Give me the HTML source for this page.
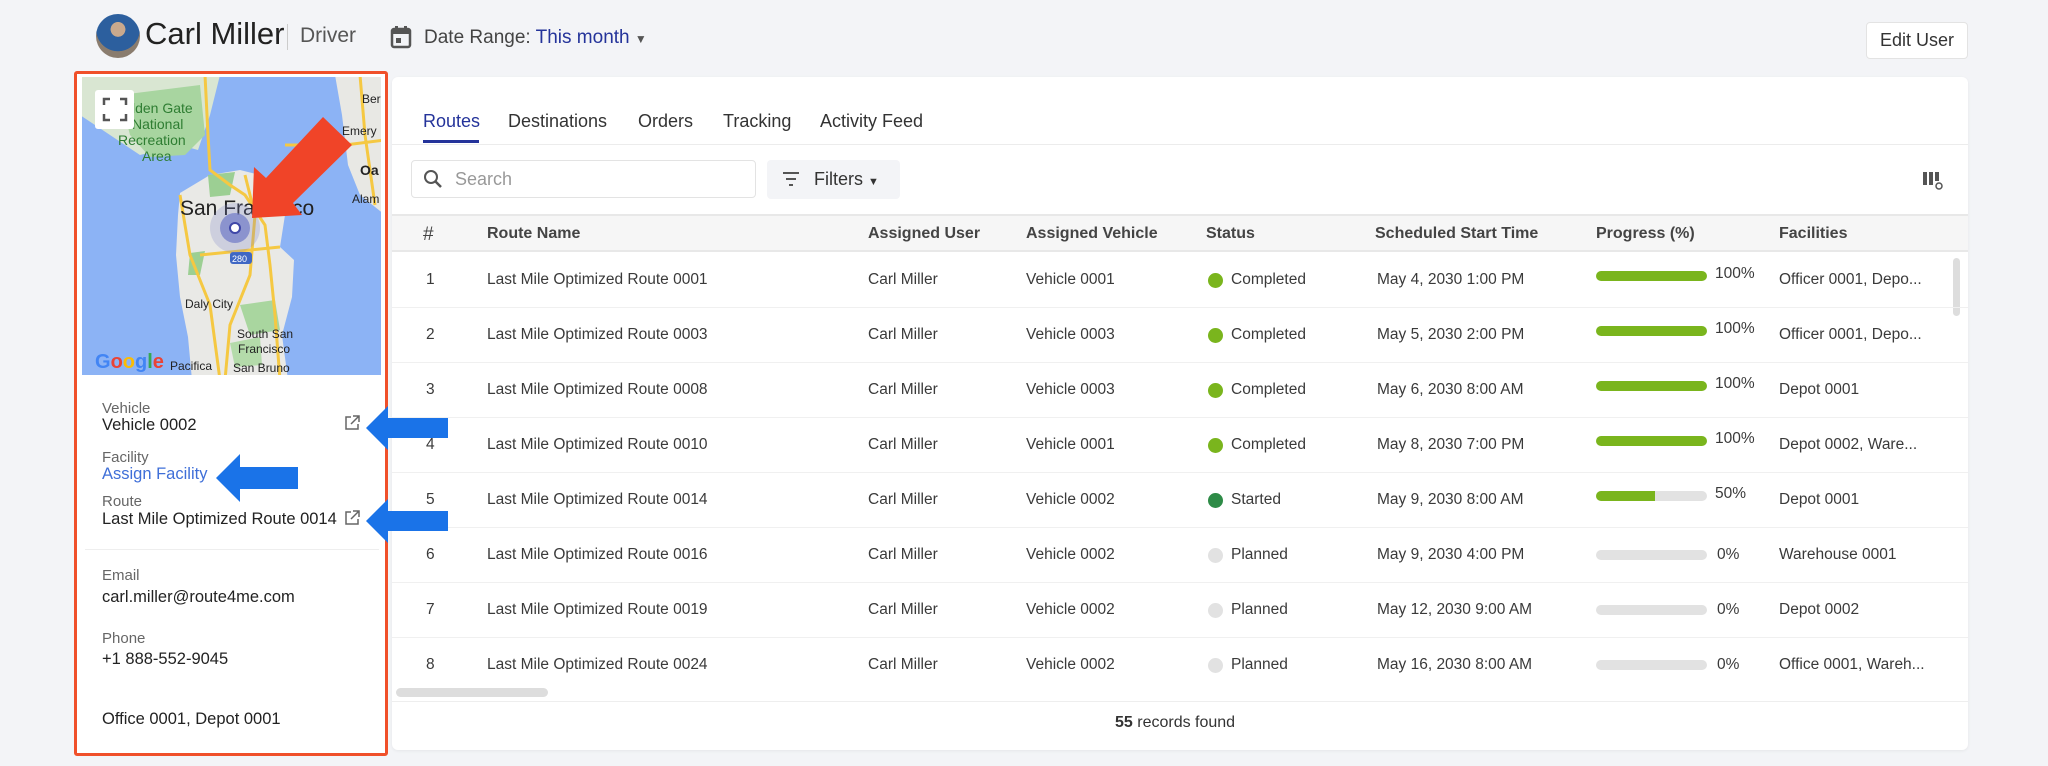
<!DOCTYPE html>
<html><head><meta charset="utf-8"><style>
*{box-sizing:border-box;margin:0;padding:0}
body{width:2048px;height:766px;background:#f3f4f7;font-family:"Liberation Sans",sans-serif;color:#333;position:relative;overflow:hidden}
.a{position:absolute;white-space:nowrap}
.t{font-size:15.5px;color:#3a3a3a}
.h{font-size:16px;font-weight:bold;color:#444}
.lbl{font-size:15px;color:#666}
.val{font-size:16.5px;color:#222}
.bar{position:absolute;width:111px;height:10px;border-radius:5px;background:#e2e2e2;overflow:hidden}
.bar i{display:block;height:100%;background:#7ab51d}
.dot{position:absolute;width:15px;height:15px;border-radius:50%}
.row{position:absolute;left:392px;width:1576px;height:1px;background:#f0f0f0}
</style></head><body>
<!-- header -->
<div class="a" style="left:96px;top:14px;width:44px;height:44px;border-radius:50%;background:radial-gradient(circle at 50% 35%,#c9a98d 0 20%,#2c5f9e 21% 60%,#8a7c6e 61%);"></div>
<div class="a" style="left:145px;top:16px;font-size:31px;color:#222">Carl Miller</div>
<div class="a" style="left:287px;top:24px;width:1px;height:26px;background:#ccc"></div>
<div class="a" style="left:300px;top:24px;font-size:21px;color:#555">Driver</div>
<svg class="a" style="left:390px;top:25px" width="22" height="24" viewBox="0 0 22 24"><rect x="2" y="4" width="18" height="18" rx="2" fill="none" stroke="#555" stroke-width="2.5"/><rect x="2" y="4" width="18" height="5" fill="#555"/><rect x="5" y="1" width="3" height="5" fill="#555"/><rect x="14" y="1" width="3" height="5" fill="#555"/><rect x="6" y="13" width="5" height="5" fill="#555"/></svg>
<div class="a" style="left:424px;top:27px;font-size:19px;color:#444">Date Range: <span style="color:#24339a">This month</span> <span style="font-size:12px;color:#555">▼</span></div>
<div class="a" style="left:1866px;top:22px;width:102px;height:37px;background:#fff;border:1px solid #e3e3e3;border-radius:4px;font-size:18px;color:#333;text-align:center;line-height:35px">Edit User</div>

<!-- left panel -->
<div class="a" style="left:74px;top:71px;width:314px;height:685px;border:3px solid #f0502a;border-radius:3px;background:#fff"></div>
<div class="a" style="left:82px;top:77px;width:299px;height:298px;overflow:hidden;background:#8ab4f8">
<svg width="305" height="305" viewBox="0 0 305 305" style="position:absolute;left:-2px;top:-2px">
<rect width="305" height="305" fill="#8cb3f5"/>
<path d="M0 0H140L130 40 118 75 100 70 60 80 30 60 0 40Z" fill="#d9e6d2"/>
<path d="M40 20 L120 10 125 60 105 80 70 82 50 60Z" fill="#a8d5a0"/>
<path d="M255 0H305V140L280 120 268 90 262 40Z" fill="#e8e8e4"/>
<path d="M100 118L130 100 160 95 180 100 192 112 205 140 200 172 214 185 212 222 202 260 208 305H112L108 262 100 222 96 180 98 140Z" fill="#e9e9e6"/>
<path d="M128 100L155 97 150 120 130 122Z" fill="#9ccf93"/>
<path d="M110 178L125 176 120 200 108 200Z" fill="#9ccf93"/>
<path d="M160 230L195 225 200 255 170 260Z" fill="#a9d69f"/>
<path d="M150 268L180 262 182 290 155 292Z" fill="#b4dbaa"/>
<g fill="none" stroke="#f5c842" stroke-width="3">
<path d="M125 0 L128 60 130 95 150 110 165 120 185 150 190 190 195 240 200 305"/>
<path d="M100 120 L110 180 130 230 140 305"/>
<path d="M165 100 L175 140 170 200 150 250 145 305"/>
<path d="M205 70 L265 70 305 65"/>
<path d="M280 0 L285 60 295 130"/>
<path d="M120 180 L200 172"/>
</g>
<g font-family="Liberation Sans,sans-serif">
<text x="52" y="38" font-size="14" fill="#2e7d32">lden Gate</text>
<text x="52" y="54" font-size="14" fill="#2e7d32">National</text>
<text x="38" y="70" font-size="14" fill="#2e7d32">Recreation</text>
<text x="62" y="86" font-size="14" fill="#2e7d32">Area</text>
<text x="100" y="140" font-size="21" fill="#222">San Francisco</text>
<text x="105" y="233" font-size="12" fill="#222">Daly City</text>
<text x="157" y="263" font-size="12" fill="#222">South San</text>
<text x="158" y="278" font-size="12" fill="#222">Francisco</text>
<text x="90" y="295" font-size="12" fill="#222">Pacifica</text>
<text x="153" y="297" font-size="12" fill="#222">San Bruno</text>
<text x="262" y="60" font-size="12" fill="#222">Emery</text>
<text x="280" y="100" font-size="14" font-weight="bold" fill="#222">Oa</text>
<text x="272" y="128" font-size="12" fill="#222">Alam</text>
<text x="282" y="28" font-size="12" fill="#222">Ber</text>
<text x="15" y="293" font-size="20" font-weight="bold"><tspan fill="#4285f4">G</tspan><tspan fill="#ea4335">o</tspan><tspan fill="#fbbc05">o</tspan><tspan fill="#4285f4">g</tspan><tspan fill="#34a853">l</tspan><tspan fill="#ea4335">e</tspan></text>
</g>
<rect x="150" y="177" width="22" height="12" rx="3" fill="#3f67c4"/><text x="152" y="187" font-size="9" fill="#fff" font-family="Liberation Sans">280</text>
<circle cx="155" cy="153" r="25" fill="#7b83c9" opacity=".25"/>
<circle cx="155" cy="153" r="15" fill="#7b83c9" opacity=".8"/>
<circle cx="155" cy="153" r="5" fill="#fff" stroke="#3f47a8" stroke-width="2"/>
<rect x="15" y="15" width="39" height="39" rx="3" fill="#fff"/>
<path d="M24 30v-6h6M40 24h6v6M46 39v6h-6M30 45h-6v-6" stroke="#555" stroke-width="2.5" fill="none"/>
<path d="M243 42 L272 70 213 128 222 140 172 143 174 92 186 103Z" fill="#f04428"/>
</svg></div>
<div class="a" style="left:85px;top:549px;width:294px;height:1px;background:#eee"></div>
<div class="a lbl" style="left:102px;top:400px">Vehicle</div>
<div class="a val" style="left:102px;top:416px">Vehicle 0002</div>
<div class="a lbl" style="left:102px;top:449px">Facility</div>
<div class="a val" style="left:102px;top:465px;color:#3f6fd8">Assign Facility</div>
<div class="a lbl" style="left:102px;top:493px">Route</div>
<div class="a val" style="left:102px;top:510px">Last Mile Optimized Route 0014</div>
<svg class="a" style="left:344px;top:415px" width="16" height="16" viewBox="0 0 16 16"><path d="M7 2H2v12h12V9M9 1h6v6M15 1L7 9" fill="none" stroke="#666" stroke-width="1.5"/></svg>
<svg class="a" style="left:344px;top:510px" width="16" height="16" viewBox="0 0 16 16"><path d="M7 2H2v12h12V9M9 1h6v6M15 1L7 9" fill="none" stroke="#666" stroke-width="1.5"/></svg>
<div class="a lbl" style="left:102px;top:567px">Email</div>
<div class="a val" style="left:102px;top:588px">carl.miller@route4me.com</div>
<div class="a lbl" style="left:102px;top:630px">Phone</div>
<div class="a val" style="left:102px;top:650px">+1 888-552-9045</div>
<div class="a val" style="left:102px;top:710px">Office 0001, Depot 0001</div>

<!-- main card -->
<div class="a" style="left:392px;top:77px;width:1576px;height:673px;background:#fff;border-radius:6px;box-shadow:0 1px 3px rgba(0,0,0,.06)"></div>
<div class="a" style="left:423px;top:111px;font-size:18px;color:#24339a">Routes</div>
<div class="a" style="left:423px;top:140px;width:56px;height:3px;background:#24339a"></div>
<div class="a" style="left:508px;top:111px;font-size:18px;color:#333">Destinations</div>
<div class="a" style="left:638px;top:111px;font-size:18px;color:#333">Orders</div>
<div class="a" style="left:723px;top:111px;font-size:18px;color:#333">Tracking</div>
<div class="a" style="left:820px;top:111px;font-size:18px;color:#333">Activity Feed</div>
<div class="a" style="left:392px;top:144px;width:1576px;height:1px;background:#ececec"></div>
<div class="a" style="left:411px;top:160px;width:345px;height:38px;border:1px solid #e3e3e3;border-radius:4px"></div>
<svg class="a" style="left:423px;top:169px" width="20" height="20"><circle cx="8" cy="8" r="6" fill="none" stroke="#555" stroke-width="2"/><path d="M12 12l6 6" stroke="#555" stroke-width="2.5"/></svg>
<div class="a" style="left:455px;top:169px;font-size:18px;color:#999">Search</div>
<div class="a" style="left:767px;top:160px;width:133px;height:39px;background:#f3f4f7;border-radius:4px"></div>
<svg class="a" style="left:782px;top:171px" width="18" height="16"><path d="M1 2h16M4 8h10M7 14h4" stroke="#555" stroke-width="2"/></svg>
<div class="a" style="left:814px;top:169px;font-size:18px;color:#333">Filters <span style="font-size:11px">▼</span></div>
<svg class="a" style="left:1922px;top:171px" width="22" height="20"><rect x="1" y="1" width="4" height="13" fill="#555"/><rect x="7" y="1" width="4" height="13" fill="#555"/><rect x="13" y="1" width="4" height="9" fill="#555"/><circle cx="17" cy="15" r="3" fill="none" stroke="#555" stroke-width="1.5"/></svg>
<div class="a" style="left:392px;top:214px;width:1576px;height:38px;background:#f6f6f6;border-top:2px solid #e8e8e8;border-bottom:2px solid #e8e8e8"></div>
<div class="a h" style="left:423px;top:224px;font-weight:normal;font-size:19px">#</div>
<div class="a h" style="left:487px;top:225px">Route Name</div>
<div class="a h" style="left:868px;top:225px">Assigned User</div>
<div class="a h" style="left:1026px;top:225px">Assigned Vehicle</div>
<div class="a h" style="left:1206px;top:225px">Status</div>
<div class="a h" style="left:1375px;top:225px">Scheduled Start Time</div>
<div class="a h" style="left:1596px;top:225px">Progress (%)</div>
<div class="a h" style="left:1779px;top:225px">Facilities</div>

<div class="a" style="left:1953px;top:258px;width:7px;height:58px;border-radius:4px;background:#ddd"></div>
<div class="a" style="left:396px;top:688px;width:152px;height:9px;border-radius:5px;background:#ddd"></div>
<div class="a" style="left:392px;top:701px;width:1576px;height:1px;background:#eee"></div>
<div class="a" style="left:1115px;top:714px;font-size:16px;color:#333"><b>55</b> records found</div>

<!-- rows -->
<div class="a t" style="left:426px;top:271px">1</div><div class="a t" style="left:487px;top:271px">Last Mile Optimized Route 0001</div><div class="a t" style="left:868px;top:271px">Carl Miller</div><div class="a t" style="left:1026px;top:271px">Vehicle 0001</div><div class="dot" style="left:1208px;top:273px;background:#7ab51d"></div><div class="a t" style="left:1231px;top:271px">Completed</div><div class="a t" style="left:1377px;top:271px">May 4, 2030 1:00 PM</div><div class="bar" style="left:1596px;top:271px"><i style="width:100%"></i></div><div class="a t" style="left:1715px;top:265px">100%</div><div class="a t" style="left:1779px;top:271px">Officer 0001, Depo...</div>
<div class="row" style="top:307px"></div>
<div class="a t" style="left:426px;top:326px">2</div><div class="a t" style="left:487px;top:326px">Last Mile Optimized Route 0003</div><div class="a t" style="left:868px;top:326px">Carl Miller</div><div class="a t" style="left:1026px;top:326px">Vehicle 0003</div><div class="dot" style="left:1208px;top:328px;background:#7ab51d"></div><div class="a t" style="left:1231px;top:326px">Completed</div><div class="a t" style="left:1377px;top:326px">May 5, 2030 2:00 PM</div><div class="bar" style="left:1596px;top:326px"><i style="width:100%"></i></div><div class="a t" style="left:1715px;top:320px">100%</div><div class="a t" style="left:1779px;top:326px">Officer 0001, Depo...</div>
<div class="row" style="top:362px"></div>
<div class="a t" style="left:426px;top:381px">3</div><div class="a t" style="left:487px;top:381px">Last Mile Optimized Route 0008</div><div class="a t" style="left:868px;top:381px">Carl Miller</div><div class="a t" style="left:1026px;top:381px">Vehicle 0003</div><div class="dot" style="left:1208px;top:383px;background:#7ab51d"></div><div class="a t" style="left:1231px;top:381px">Completed</div><div class="a t" style="left:1377px;top:381px">May 6, 2030 8:00 AM</div><div class="bar" style="left:1596px;top:381px"><i style="width:100%"></i></div><div class="a t" style="left:1715px;top:375px">100%</div><div class="a t" style="left:1779px;top:381px">Depot 0001</div>
<div class="row" style="top:417px"></div>
<div class="a t" style="left:426px;top:436px">4</div><div class="a t" style="left:487px;top:436px">Last Mile Optimized Route 0010</div><div class="a t" style="left:868px;top:436px">Carl Miller</div><div class="a t" style="left:1026px;top:436px">Vehicle 0001</div><div class="dot" style="left:1208px;top:438px;background:#7ab51d"></div><div class="a t" style="left:1231px;top:436px">Completed</div><div class="a t" style="left:1377px;top:436px">May 8, 2030 7:00 PM</div><div class="bar" style="left:1596px;top:436px"><i style="width:100%"></i></div><div class="a t" style="left:1715px;top:430px">100%</div><div class="a t" style="left:1779px;top:436px">Depot 0002, Ware...</div>
<div class="row" style="top:472px"></div>
<div class="a t" style="left:426px;top:491px">5</div><div class="a t" style="left:487px;top:491px">Last Mile Optimized Route 0014</div><div class="a t" style="left:868px;top:491px">Carl Miller</div><div class="a t" style="left:1026px;top:491px">Vehicle 0002</div><div class="dot" style="left:1208px;top:493px;background:#2e8b47"></div><div class="a t" style="left:1231px;top:491px">Started</div><div class="a t" style="left:1377px;top:491px">May 9, 2030 8:00 AM</div><div class="bar" style="left:1596px;top:491px"><i style="width:53%"></i></div><div class="a t" style="left:1715px;top:485px">50%</div><div class="a t" style="left:1779px;top:491px">Depot 0001</div>
<div class="row" style="top:527px"></div>
<div class="a t" style="left:426px;top:546px">6</div><div class="a t" style="left:487px;top:546px">Last Mile Optimized Route 0016</div><div class="a t" style="left:868px;top:546px">Carl Miller</div><div class="a t" style="left:1026px;top:546px">Vehicle 0002</div><div class="dot" style="left:1208px;top:548px;background:#e2e2e2"></div><div class="a t" style="left:1231px;top:546px">Planned</div><div class="a t" style="left:1377px;top:546px">May 9, 2030 4:00 PM</div><div class="bar" style="left:1596px;top:550px"></div><div class="a t" style="left:1717px;top:546px">0%</div><div class="a t" style="left:1779px;top:546px">Warehouse 0001</div>
<div class="row" style="top:582px"></div>
<div class="a t" style="left:426px;top:601px">7</div><div class="a t" style="left:487px;top:601px">Last Mile Optimized Route 0019</div><div class="a t" style="left:868px;top:601px">Carl Miller</div><div class="a t" style="left:1026px;top:601px">Vehicle 0002</div><div class="dot" style="left:1208px;top:603px;background:#e2e2e2"></div><div class="a t" style="left:1231px;top:601px">Planned</div><div class="a t" style="left:1377px;top:601px">May 12, 2030 9:00 AM</div><div class="bar" style="left:1596px;top:605px"></div><div class="a t" style="left:1717px;top:601px">0%</div><div class="a t" style="left:1779px;top:601px">Depot 0002</div>
<div class="row" style="top:637px"></div>
<div class="a t" style="left:426px;top:656px">8</div><div class="a t" style="left:487px;top:656px">Last Mile Optimized Route 0024</div><div class="a t" style="left:868px;top:656px">Carl Miller</div><div class="a t" style="left:1026px;top:656px">Vehicle 0002</div><div class="dot" style="left:1208px;top:658px;background:#e2e2e2"></div><div class="a t" style="left:1231px;top:656px">Planned</div><div class="a t" style="left:1377px;top:656px">May 16, 2030 8:00 AM</div><div class="bar" style="left:1596px;top:660px"></div><div class="a t" style="left:1717px;top:656px">0%</div><div class="a t" style="left:1779px;top:656px">Office 0001, Wareh...</div>

<!-- blue arrows (on top) -->
<svg class="a" style="left:364px;top:405px;z-index:5" width="86" height="46"><path d="M2 23 L24 1 24 13 84 13 84 33 24 33 24 45Z" fill="#1a73e8"/></svg>
<svg class="a" style="left:214px;top:453px;z-index:5" width="86" height="50"><path d="M2 25 L26 1 26 14 84 14 84 36 26 36 26 49Z" fill="#1a73e8"/></svg>
<svg class="a" style="left:364px;top:498px;z-index:5" width="86" height="46"><path d="M2 23 L24 1 24 13 84 13 84 33 24 33 24 45Z" fill="#1a73e8"/></svg>
</body></html>
